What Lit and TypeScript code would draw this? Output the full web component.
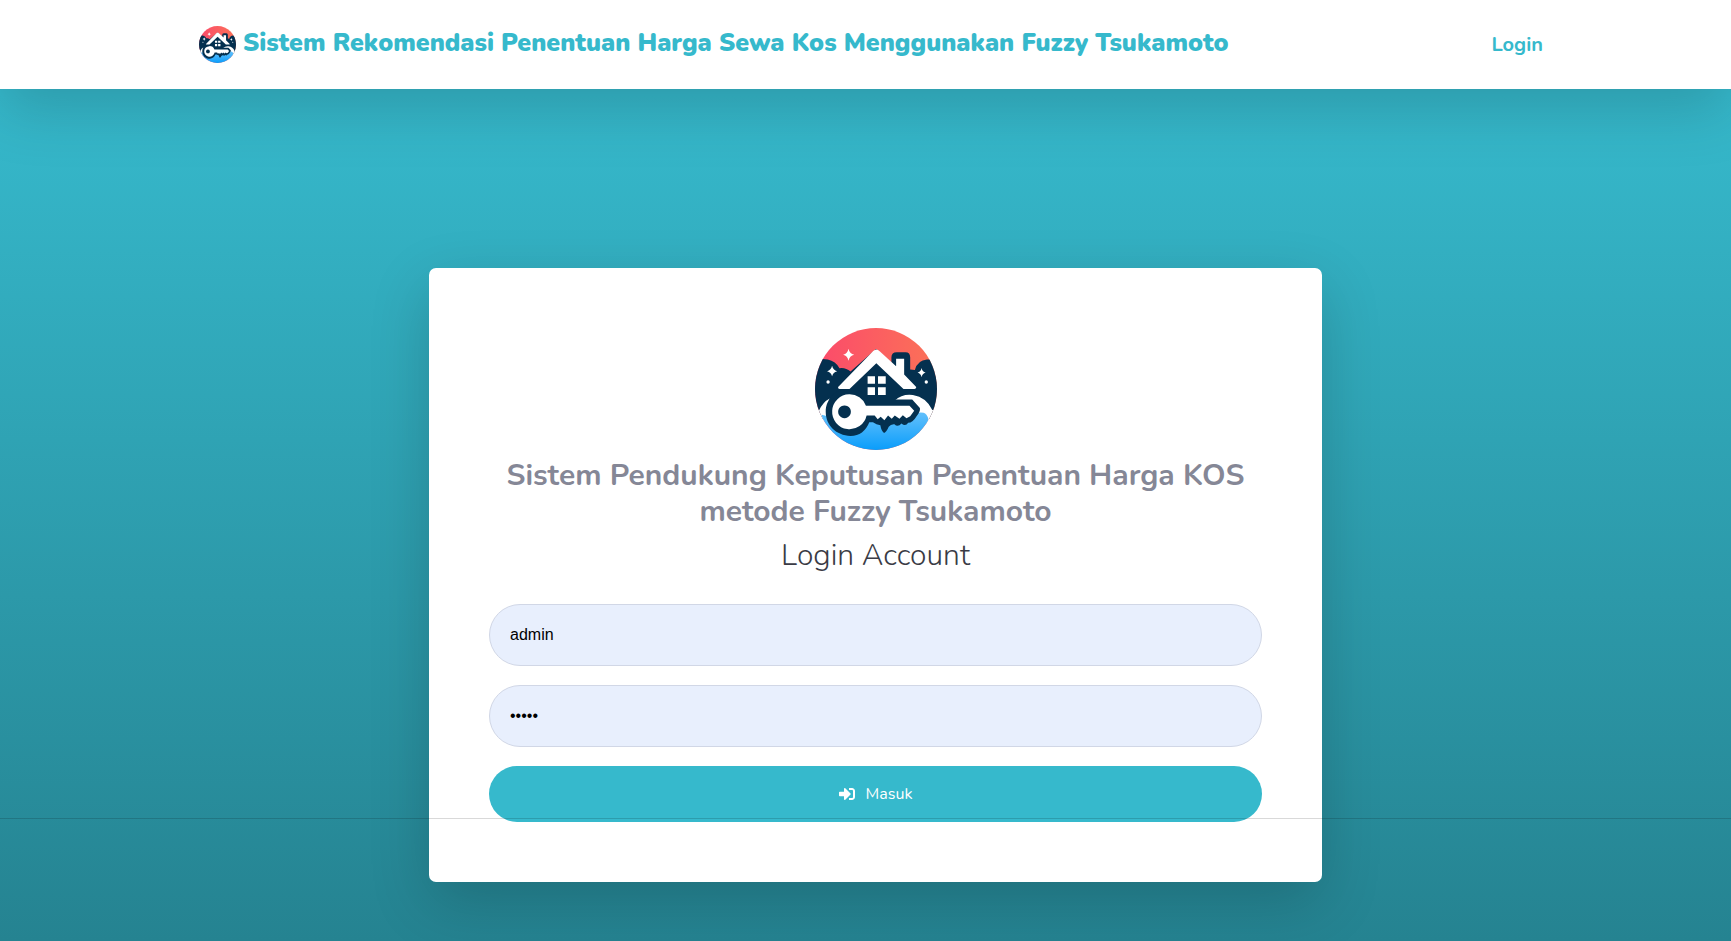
import { LitElement, html, css } from "lit";
import { customElement, property } from "lit/decorators.js";

@customElement("kos-logo")
class KosLogo extends LitElement {
  static styles = css`
    :host {
      display: block;
      flex: none;
    }
    .mark {
      display: block;
      width: 100%;
      height: 100%;
    }
  `;

  render() {
    return html`
      <svg class="mark" viewBox="74 57 364 364" aria-hidden="true">
        <defs>
          <clipPath id="disc"><circle cx="256" cy="239" r="182" /></clipPath>
          <linearGradient id="sky" x1="0" y1="0" x2="1" y2="0">
            <stop offset="0" stop-color="#fb4a6b" />
            <stop offset="1" stop-color="#fb7257" />
          </linearGradient>
          <linearGradient id="water" x1="0" y1="0" x2="0" y2="1">
            <stop offset="0" stop-color="#63c0fb" />
            <stop offset="1" stop-color="#0a9dfb" />
          </linearGradient>
        </defs>
        <g clip-path="url(#disc)">
          <rect x="74" y="57" width="364" height="364" fill="url(#sky)" />
          <path
            fill="#04304f"
            d="M70 156Q90 146 112 151Q136 156 147 177Q165 174 180 187L256 120L302 160V145Q302 129 318 129H344Q358 129 358 145V181L372 182Q380 153 408 151Q425 149 440 158V330H70Z"
          />
          <path fill="#fff" d="M312 273Q334 253 366 257Q407 264 424 302H440V340H330V290ZM118 267Q98 277 86 303H70V335H122Q110 294 118 267Z" />
          <path fill="url(#water)" d="M94 316Q112 318 130 330L340 335Q372 304 398 310Q408 314 412 327L400 421H140L97 330Z" />
          <path
            fill="#04304f"
            d="M176 237A68 68 0 0 1 234 270H364L387 296Q389 307 377 320Q366 339 352 340Q344 352 332 342Q321 354 311 344Q300 343 294 352Q287 369 280 370Q272 365 269 347Q257 345 247 338H236Q220 378 180 379C137 378 106 347 106 307C107 267 137 238 176 237Z"
          />
        </g>
        <path
          fill="#fff"
          d="M257 121Q262 121 267 126L316 171V149H340V196L376 233Q377 238 371 239H338L257 162L177 239H147Q141 238 143 233L247 126Q252 121 257 121Z"
        />
        <path fill="#fff" d="M231 201h22v22h-22zM262 201h23v22h-23zM231 234h22v23h-22zM262 234h23v23h-23z" />
        <path
          fill="#fff"
          fill-rule="evenodd"
          d="M176 255A52 52 0 0 1 226 289H356L370 304L358 320L347 326L336 317L326 328L312 318L303 328L292 318L281 332L270 322L261 329L252 318H228A52 52 0 1 1 176 255ZM162 288a19 19 0 1 0 .1 0Z"
        />
        <path
          fill="#fff"
          d="M174 119Q177 134 191 137Q177 140 174 155Q171 140 158 137Q171 134 174 119ZM125 170Q128 183 140 186Q128 189 125 201Q122 189 110 186Q122 183 125 170ZM392 176Q394 187 404 190Q394 193 392 204Q390 193 380 190Q390 187 392 176Z"
        />
        <circle cx="113" cy="218" r="5" fill="#fff" />
        <circle cx="406" cy="218" r="5" fill="#fff" />
      </svg>
    `;
  }
}

@customElement("app-root")
export class AppRoot extends LitElement {
  @property() username = "admin";
  @property() password = "admin";

  static styles = css`
    :host {
      display: flex;
      flex-direction: column;
      position: relative;
      box-sizing: border-box;
      min-height: 100vh;
      background: linear-gradient(180deg, #36b9cc 10%, #258391 100%);
      font-family: Nunito, "Open Sans", sans-serif;
      color: #3a3b45;
    }
    .topbar {
      background: #fff;
      box-shadow: 0 20px 60px rgba(0, 0, 0, 0.175);
    }
    .topbar-inner {
      display: flex;
      align-items: center;
      justify-content: space-between;
      height: 89px;
      margin: 0 188px 0 199px;
    }
    .brand {
      display: flex;
      align-items: center;
      gap: 7px;
      color: #36b9cc;
      font-size: 25px;
      font-weight: 900;
      line-height: 36px;
      text-decoration: none;
    }
    .brand-text {
      padding-bottom: 3px;
    }
    .brand-logo {
      width: 37px;
      height: 37px;
    }
    .nav-link {
      color: #36b9cc;
      font-size: 20px;
      font-weight: 700;
      line-height: 30px;
      text-decoration: none;
    }
    .content {
      display: flex;
      justify-content: center;
      padding: 179px 0 58px 20px;
    }
    .card {
      box-sizing: border-box;
      width: 893px;
      max-width: 100%;
      padding: 60px;
      border-radius: 7px;
      background: #fff;
      box-shadow: 0 20px 60px rgba(0, 0, 0, 0.175);
    }
    .card-head {
      display: flex;
      flex-direction: column;
      align-items: center;
      text-align: center;
    }
    .card-logo {
      width: 122px;
      height: 122px;
    }
    .title {
      margin: 8px 0;
      color: #858796;
      font-size: 30px;
      font-weight: 700;
      line-height: 36px;
    }
    .subtitle {
      margin: 0 0 30px;
      font-size: 30px;
      font-weight: 300;
      line-height: 36px;
    }
    .form {
      display: flex;
      flex-direction: column;
      gap: 19px;
    }
    .field {
      box-sizing: border-box;
      width: 100%;
      height: 62px;
      padding: 0 20px;
      border: 1px solid #d1d7e6;
      border-radius: 31px;
      background: #e8effd;
      color: #000;
      font-family: "Liberation Sans", Arial, sans-serif;
      font-size: 16px;
    }
    .submit {
      display: flex;
      align-items: center;
      justify-content: center;
      gap: 11px;
      height: 56px;
      border: 0;
      border-radius: 28px;
      background: #36b9cc;
      color: #fff;
      font-family: inherit;
      font-size: 16px;
      font-weight: 400;
    }
    .submit-icon {
      width: 16px;
      height: 16px;
    }
    .rule {
      position: absolute;
      right: 0;
      bottom: 122px;
      left: 0;
      margin: 0;
      border: 0;
      border-top: 1px solid rgba(0, 0, 0, 0.15);
    }
  `;

  render() {
    return html`
      <header class="topbar">
        <nav class="topbar-inner">
          <a class="brand" href="#">
            <kos-logo class="brand-logo"></kos-logo>
            <span class="brand-text">Sistem Rekomendasi Penentuan Harga Sewa Kos Menggunakan Fuzzy Tsukamoto</span>
          </a>
          <a class="nav-link" href="#login">Login</a>
        </nav>
      </header>
      <main class="content">
        <section class="card">
          <div class="card-head">
            <kos-logo class="card-logo"></kos-logo>
            <h1 class="title">Sistem Pendukung Keputusan Penentuan Harga KOS<br />metode Fuzzy Tsukamoto</h1>
            <h2 class="subtitle">Login Account</h2>
          </div>
          <form class="form" @submit=${(e: Event) => e.preventDefault()}>
            <input class="field" type="text" aria-label="Username" autocomplete="username" .value=${this.username} />
            <input class="field" type="password" aria-label="Password" autocomplete="current-password" .value=${this.password} />
            <button class="submit" type="submit">
              <svg class="submit-icon" viewBox="0 0 512 512" aria-hidden="true">
                <path
                  fill="currentColor"
                  d="M416 448h-84c-6.600 0-12-5.400-12-12v-40c0-6.600 5.400-12 12-12h84c17.700 0 32-14.300 32-32V160c0-17.700-14.300-32-32-32h-84c-6.600 0-12-5.400-12-12V76c0-6.600 5.400-12 12-12h84c53 0 96 43 96 96v192c0 53-43 96-96 96zm-47-209L201 71c-15-15-41-4.500-41 17v96H24c-13.300 0-24 10.700-24 24v96c0 13.300 10.700 24 24 24h136v96c0 21.500 26 32 41 17l168-168c9.300-9.400 9.300-24.600 0-34z"
                />
              </svg>
              <span>Masuk</span>
            </button>
          </form>
        </section>
      </main>
      <hr class="rule" />
    `;
  }
}
